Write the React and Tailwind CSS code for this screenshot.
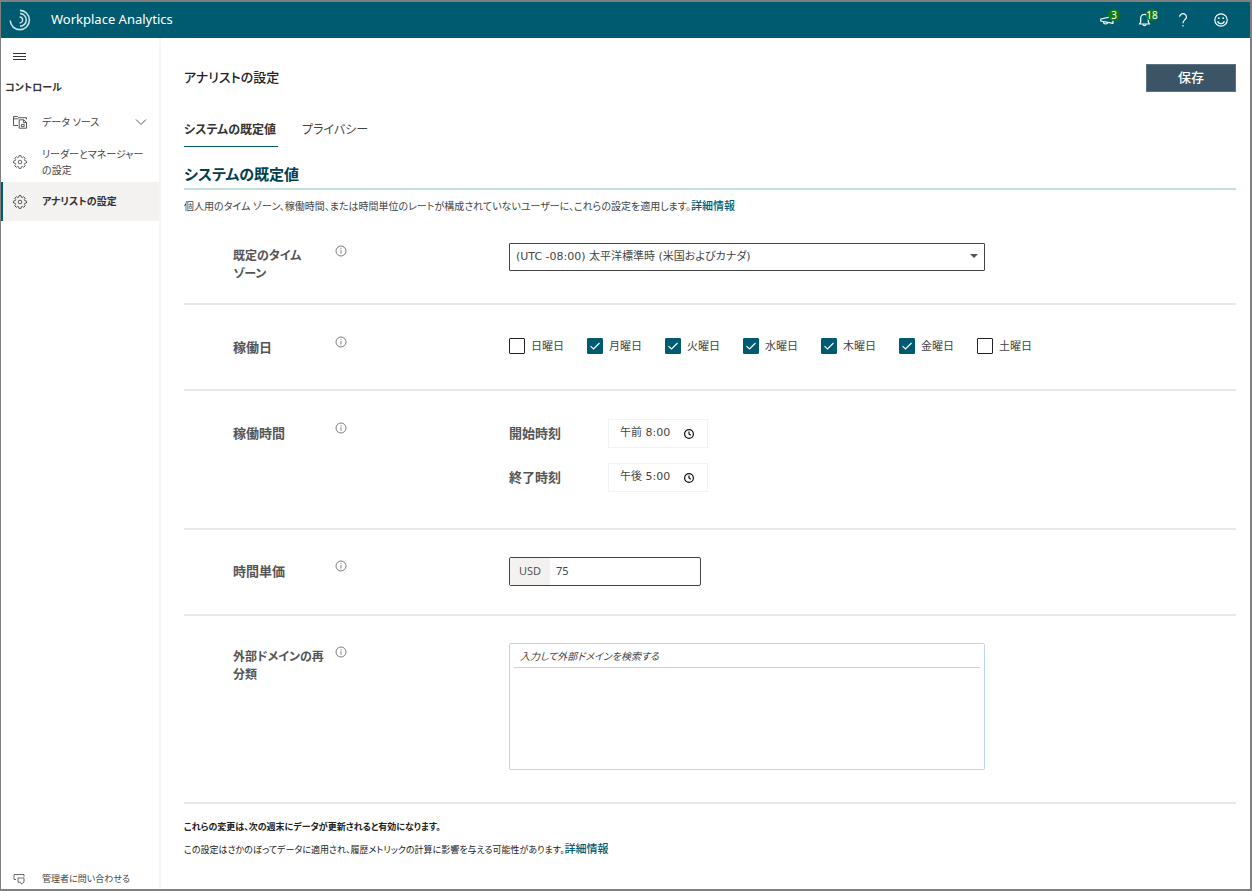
import React, { useState } from "react";

const DAYS = [
  { id: "sun", label: "日曜日", on: false },
  { id: "mon", label: "月曜日", on: true },
  { id: "tue", label: "火曜日", on: true },
  { id: "wed", label: "水曜日", on: true },
  { id: "thu", label: "木曜日", on: true },
  { id: "fri", label: "金曜日", on: true },
  { id: "sat", label: "土曜日", on: false },
];

const Gear = () => (
  <svg viewBox="0 0 14 14" className="size-3.5 shrink-0" fill="none" stroke="currentColor" strokeWidth="0.8" strokeLinejoin="round">
    <path d="M6 .6h2l.3 1.6 1 .4 1.4-.9 1.5 1.5-.9 1.4.4 1 1.7.4v2l-1.7.4-.4 1 .9 1.4-1.5 1.5-1.4-.9-1 .4-.3 1.6H6l-.3-1.6-1-.4-1.4.9-1.5-1.5.9-1.4-.4-1L.6 8V6l1.7-.4.4-1-.9-1.4 1.5-1.5 1.4.9 1-.4z" />
    <circle cx="7" cy="7" r="1.8" />
  </svg>
);

const DataFolder = () => (
  <svg viewBox="0 0 14 14" className="size-3.5 shrink-0" fill="none" stroke="currentColor" strokeWidth="0.9">
    <path d="M5 10.5H.5v-9h4l1.2 1.2h7.8v1.6M.5 3.8h5" />
    <path d="M6.2 4.8h4.6l2.7 2.6v5.8H6.2zM10.6 5v2.6h2.8" />
    <path d="M8.4 11.6V9.4h2.8v2.2z" />
  </svg>
);

const Chat = () => (
  <svg viewBox="0 0 12 12" className="size-3 shrink-0" fill="none" stroke="currentColor" strokeWidth="0.8">
    <path d="M3 6.5H1v-5h10v2.3" />
    <path d="M5 5h6v4L8.6 11 7.4 9.2H5z" />
  </svg>
);

const Info = () => (
  <svg viewBox="0 0 12 12" className="size-3" fill="none" stroke="#605e5c" strokeWidth="0.8">
    <circle cx="6" cy="6" r="5" />
    <path d="M6 5.2v3.4M6 3.3v1" />
  </svg>
);

const Clock = () => (
  <svg viewBox="0 0 12 12" className="size-3 shrink-0" fill="none" stroke="#111" strokeWidth="1.2">
    <circle cx="6" cy="6" r="4.4" />
    <path d="M6 3.4V6l1.8 1.2" />
  </svg>
);

const Logo = () => (
  <svg viewBox="0 0 22 22" className="size-[22px]" fill="none" stroke="#c9e3e8">
    <path d="M1.2 11.5A9.6 9.6 0 1 0 11 1.4" strokeWidth="1.6" />
    <path d="M11 4.6a6.3 6.3 0 0 1 0 12.6" strokeWidth="1.5" />
    <path d="M10.6 8a3 3 0 0 1 0 6" strokeWidth="1.4" />
  </svg>
);

const Badge = ({ children }) => (
  <span className="absolute -top-1 left-2 flex size-3 items-center justify-center rounded-full bg-[#107c10] text-[10px] leading-3 text-white">
    {children}
  </span>
);

function Header() {
  return (
    <header className="flex h-9 items-center bg-[#005b70] pr-[22px] pl-2 text-white">
      <Logo />
      <span className="ml-5 text-[13px]">Workplace Analytics</span>
      <div className="ml-auto flex items-center gap-6">
        <button aria-label="お知らせ" className="relative">
          <svg viewBox="0 0 14 14" className="size-3.5" fill="none" stroke="currentColor" strokeWidth="1.2" strokeLinejoin="round">
            <path d="M.8 6v2L13 10.4V3.4z" />
            <path d="M3.6 8.8v.8c0 1.8 3.8 1.9 4 .2v-.4" />
          </svg>
          <Badge>3</Badge>
        </button>
        <button aria-label="通知" className="relative">
          <svg viewBox="0 0 14 14" className="size-3.5" fill="none" stroke="currentColor" strokeWidth="1.2" strokeLinejoin="round">
            <path d="M1.4 11h10.2L10.3 9V5.2a3.8 3.8 0 0 0-7.6 0V9z" />
            <path d="M5 11.4c.2 1.7 2.8 1.7 3 0" />
          </svg>
          <Badge>18</Badge>
        </button>
        <button aria-label="ヘルプ">
          <svg viewBox="0 0 14 14" className="size-3.5" fill="none" stroke="currentColor" strokeWidth="1.2">
            <path d="M3.6 3.8a3.4 3.2 0 1 1 5.7 2.4C8 7.4 7 8 7 10.2" />
            <path d="M7 12v1.4" />
          </svg>
        </button>
        <button aria-label="フィードバック">
          <svg viewBox="0 0 14 14" className="size-3.5" fill="none" stroke="currentColor" strokeWidth="1.2">
            <circle cx="7" cy="7" r="6.2" />
            <path d="M3.6 8.2c1 3.2 5.8 3.2 6.8 0" />
            <circle cx="4.8" cy="5.2" r=".9" fill="currentColor" stroke="none" />
            <circle cx="9.2" cy="5.2" r=".9" fill="currentColor" stroke="none" />
          </svg>
        </button>
      </div>
    </header>
  );
}

function Sidebar() {
  return (
    <aside className="flex w-40 shrink-0 flex-col border-r-2 border-[#f5f5f5] text-[10px] text-[#444]">
      <button aria-label="メニュー" className="mt-[15px] ml-3 flex h-[7px] w-[13px] flex-col justify-between">
        <span className="h-px w-full bg-[#333]" />
        <span className="h-px w-full bg-[#333]" />
        <span className="h-px w-full bg-[#333]" />
      </button>
      <h2 className="mt-[19px] pl-1 leading-4 font-bold text-[#333]">コントロール</h2>
      <nav className="mt-[7px]">
        <a href="#data" className="flex h-10 items-center px-3">
          <DataFolder />
          <span className="ml-[15px] grow">データ ソース</span>
          <svg viewBox="0 0 12 8" className="h-2 w-3" fill="none" stroke="currentColor" strokeWidth="0.9">
            <path d="M1 1.5l5 5 5-5" />
          </svg>
        </a>
        <a href="#leaders" className="flex h-10 items-center pl-3 leading-4">
          <Gear />
          <span className="ml-[15px]">
            リーダーとマネージャー
            <br />
            の設定
          </span>
        </a>
        <a href="#analyst" className="flex h-[39px] items-center border-l-2 border-[#005b70] bg-[#f3f2f1] pl-2.5 font-bold text-[#333]">
          <Gear />
          <span className="ml-[15px]">アナリストの設定</span>
        </a>
      </nav>
      <a href="#contact" className="mt-auto flex h-5 items-center pl-3 text-[9px]">
        <Chat />
        <span className="ml-[17px]">管理者に問い合わせる</span>
      </a>
    </aside>
  );
}

function Row({ label, htmlFor, className, labelClass = "text-[13px]", children }) {
  return (
    <div className={`flex items-start border-b-2 border-[#e8e8e8] pl-[49px] ${className}`}>
      <label htmlFor={htmlFor} className={`w-[102px] pt-0.5 leading-[18px] font-bold text-[#555] ${labelClass}`}>
        {label}
      </label>
      <button aria-label="情報">
        <Info />
      </button>
      <div className="-mt-[3px] ml-[162px] grow">{children}</div>
    </div>
  );
}

function TimeField({ id, label, value }) {
  return (
    <div className="flex items-center">
      <label htmlFor={id} className="w-[99px] text-[13px] font-bold text-[#555]">
        {label}
      </label>
      <div className="flex h-[29px] w-[100px] items-center border border-[#eef4f6] pr-3 pl-[11px]">
        <input
          id={id}
          defaultValue={value}
          className="w-full min-w-0 font-['DejaVu_Sans','Noto_Sans_CJK_JP',sans-serif] text-[11px] text-[#444] outline-none"
        />
        <Clock />
      </div>
    </div>
  );
}

function Day({ id, label, on }) {
  const [checked, setChecked] = useState(on);
  return (
    <label htmlFor={id} className="flex w-[78px] items-center text-[11px] text-[#444]">
      <span className="relative flex">
        <input
          id={id}
          type="checkbox"
          checked={checked}
          onChange={() => setChecked(!checked)}
          className="size-4 appearance-none rounded-[1px] border border-[#222] bg-white checked:border-[#005b70] checked:bg-[#005b70]"
        />
        {checked && (
          <svg viewBox="0 0 16 16" className="pointer-events-none absolute inset-0 size-4" fill="none" stroke="#fff" strokeWidth="1.1">
            <path d="M3.5 8.2l3 2.8 6-6" />
          </svg>
        )}
      </span>
      <span className="ml-1.5">{label}</span>
    </label>
  );
}

export default function App() {
  const [tab, setTab] = useState("defaults");

  return (
    <div className="flex min-h-screen flex-col border-t-2 border-r-2 border-b-2 border-l border-[#808080] bg-white font-['Noto_Sans','Noto_Sans_CJK_JP',sans-serif] [font-feature-settings:'palt']">
      <Header />
      <div className="flex grow">
        <Sidebar />
        <main className="min-w-0 grow pr-3.5 pl-[23px] text-[#444]">
          <div className="mt-[26px] flex h-7 items-center justify-between">
            <h1 className="text-[13px] font-medium text-[#222]">アナリストの設定</h1>
            <button className="h-7 w-[90px] border border-[#5c7482] bg-[#3b5566] text-[13px] font-medium text-white">保存</button>
          </div>

          <div role="tablist" className="mt-6 flex h-[31px] gap-6 text-xs">
            <button
              role="tab"
              aria-selected={tab === "defaults"}
              onClick={() => setTab("defaults")}
              className="border-b border-transparent pt-1 pr-0.5 pb-2 leading-5 aria-selected:border-[#005b70] aria-selected:font-bold aria-selected:text-[#333]"
            >
              システムの既定値
            </button>
            <button
              role="tab"
              aria-selected={tab === "privacy"}
              onClick={() => setTab("privacy")}
              className="border-b border-transparent pt-1 pb-2 leading-5 aria-selected:border-[#005b70] aria-selected:font-bold"
            >
              プライバシー
            </button>
          </div>

          <h2 className="mt-4 border-b-2 border-[#c3e0e0] pb-[3px] text-[15px] leading-[22px] font-bold text-[#004050]">システムの既定値</h2>
          <p className="mt-2 text-[10px] leading-4 text-[#444]">
            個人用のタイム ゾーン、稼働時間、または時間単位のレートが構成されていないユーザーに、これらの設定を適用します。
            <a href="#more" className="text-[11px] font-medium text-[#005b70]">詳細情報</a>
          </p>

          <Row label={<>既定のタイム<br />ゾーン</>} htmlFor="zone" className="mt-[31px] h-[60px]" labelClass="text-xs">
            <div className="relative w-[476px]">
              <select
                id="zone"
                className="h-7 w-full appearance-none rounded-[1px] border border-[#444] pl-1.5 font-['DejaVu_Sans','Noto_Sans_CJK_JP',sans-serif] text-[11px] text-[#444]"
              >
                <option>(UTC -08:00) 太平洋標準時 (米国およびカナダ)</option>
              </select>
              <svg viewBox="0 0 8 4" className="pointer-events-none absolute top-3 right-[7px] h-1 w-2" fill="#555">
                <path d="M0 0h8L4 4z" />
              </svg>
            </div>
          </Row>

          <Row label="稼働日" htmlFor="sun" className="h-[86px] pt-[31px]">
            <div className="flex pt-[5px]">
              {DAYS.map((d) => (
                <Day key={d.id} {...d} />
              ))}
            </div>
          </Row>

          <Row label="稼働時間" htmlFor="start" className="h-[139px] pt-[31px]">
            <div className="flex flex-col gap-[15px]">
              <TimeField id="start" label="開始時刻" value="午前 8:00" />
              <TimeField id="end" label="終了時刻" value="午後 5:00" />
            </div>
          </Row>

          <Row label="時間単価" htmlFor="rate" className="h-[86px] pt-[30px]">
            <div className="flex h-[29px] w-48 rounded-xs border border-[#444] text-[11px]">
              <span className="flex w-10 shrink-0 items-center justify-center bg-[#f3f2f1] text-[#555]">USD</span>
              <input id="rate" defaultValue="75" className="min-w-0 grow pl-1.5 outline-none" />
            </div>
          </Row>

          <Row label={<>外部ドメインの再<br />分類</>} htmlFor="domains" className="h-[188px] pt-[30px]" labelClass="text-xs">
            <div className="h-[127px] w-[476px] rounded-xs border border-[#b8d8e2] px-1">
              <input
                id="domains"
                placeholder="入力して外部ドメインを検索する"
                className="block h-6 w-full border-b border-[#b8d8e2] pl-1.5 text-[10px] italic outline-none placeholder:text-[#444]"
              />
            </div>
          </Row>

          <p className="mt-[15px] text-[9px] leading-4 font-bold text-[#222]">これらの変更は、次の週末にデータが更新されると有効になります。</p>
          <p className="mt-1.5 text-[9px] leading-4 text-[#222]">
            この設定はさかのぼってデータに適用され、履歴メトリックの計算に影響を与える可能性があります。
            <a href="#more" className="text-[11px] font-medium text-[#005b70]">詳細情報</a>
          </p>
        </main>
      </div>
    </div>
  );
}
